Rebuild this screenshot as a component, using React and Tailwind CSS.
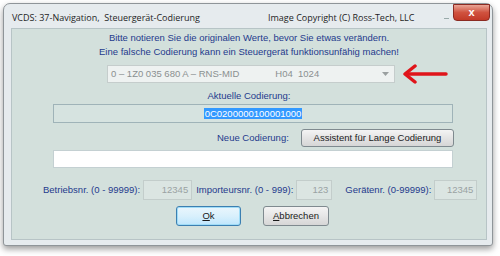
import React from 'react';

const sans = { fontFamily: '"Liberation Sans", Arial, sans-serif' };
const titleFont = { fontFamily: '"Open Sans", "Noto Sans", sans-serif' };

const NumField = ({ label, value, width }) => (
  <div className="flex items-center whitespace-nowrap">
    <span className="text-[9.5px] text-[#243a8c] mr-[3px]">{label}</span>
    <div
      className={`${width} h-[20px] bg-[#dbe5e2] border border-[#c3cdcb] flex items-center justify-end pr-[3px] text-[9.5px] text-[#9aa2a2]`}
    >
      {value}
    </div>
  </div>
);

const App = () => {
  return (
    <div className="w-[500px] h-[256px] bg-white pt-[3px] pl-[3px]" style={sans}>
      {/* Window */}
      <div className="w-[490px] h-[243px] bg-[#e6ebee] border border-[#8f9599] rounded-t-[7px] rounded-b-[3px] shadow-[0_3px_6px_rgba(0,0,0,0.4)] flex flex-col">
        {/* Title bar */}
        <div className="h-[24px] flex items-start relative whitespace-nowrap">
          <span className="ml-[8px] mt-[8px] text-[9px] leading-[12px] text-[#1e1e1e]" style={titleFont}>
            VCDS: 37-Navigation,&nbsp; Steuergerät-Codierung
          </span>
          <span className="absolute left-[264px] top-[8px] text-[9px] leading-[12px] text-[#1e1e1e]" style={titleFont}>
            Image Copyright (C) Ross-Tech, LLC
          </span>
          <span className="absolute left-[440px] top-[14px] w-[5px] h-[1px] bg-[#9aa]" />
          <div className="absolute left-[449px] top-0 w-[37px] h-[17px] rounded-b-[4px] border border-[#8b2a22] bg-[linear-gradient(#e9a596,#d0523f_50%,#c23a28)] flex items-center justify-center">
            <span className="text-white text-[11px] font-bold leading-none -mt-[1px]">x</span>
          </div>
        </div>

        {/* Client area */}
        <div className="ml-[7px] w-[476px] h-[212px] bg-[#d3e0dc] border border-[#b7c4c6] flex flex-col text-[#243a8c]">
          <div className="mt-[2px] text-center text-[9.5px] leading-[14px]">
            Bitte notieren Sie die originalen Werte, bevor Sie etwas verändern.
          </div>
          <div className="text-center text-[9.5px] leading-[14px]">
            Eine falsche Codierung kann ein Steuergerät funktionsunfähig machen!
          </div>

          {/* Dropdown row */}
          <div className="mt-[5px] flex items-center">
            <div className="ml-[95px] w-[288px] h-[18px] bg-[#eef2f1] border border-[#c5cdcc] flex items-center text-[9.5px] text-[#8a9090] whitespace-nowrap">
              <span className="ml-[3px]">0 – 1Z0 035 680 A – RNS-MID</span>
              <span className="ml-[36px]">H04&nbsp; 1024</span>
              <svg className="ml-auto mr-[5px]" width="7" height="4" viewBox="0 0 7 4">
                <path d="M0 0h7L3.5 4z" fill="#9aa0a0" />
              </svg>
            </div>
            <svg className="ml-[7px]" width="46" height="20" viewBox="0 0 46 20">
              <path d="M44 10H6" stroke="#e0141a" strokeWidth="3.5" strokeLinecap="round" />
              <path d="M13 2L3 10l10 8" fill="none" stroke="#e0141a" strokeWidth="3.5" strokeLinecap="round" strokeLinejoin="round" />
            </svg>
          </div>

          <div className="mt-[5px] text-center text-[9.5px] leading-[13px]">Aktuelle Codierung:</div>

          {/* Current coding */}
          <div className="mt-[2px] ml-[41px] w-[400px] h-[19px] bg-[#d6e3e0] border border-[#9fb3b8] flex items-center justify-center">
            <span className="bg-[#3399ff] text-white text-[9.5px] leading-[11px] px-[1px]">0C0200000100001000</span>
          </div>

          {/* Neue Codierung row */}
          <div className="mt-[6px] flex items-center">
            <span className="ml-[205px] w-[74px] text-[9.5px] whitespace-nowrap">Neue Codierung:</span>
            <button className="ml-[10px] w-[153px] h-[18px] rounded-[3px] border border-[#7f8a8f] bg-[linear-gradient(#f4f4f4,#e4e4e4_50%,#d6d6d6)] text-[9.5px] text-[#1a1a1a] whitespace-nowrap">
              Assistent für Lange Codierung
            </button>
          </div>

          {/* New coding input */}
          <div className="mt-[3px] ml-[41px] w-[400px] h-[18px] bg-white border border-[#c4d0d2]" />

          {/* Numbers row */}
          <div className="mt-[12px] ml-[31px] flex items-center">
            <NumField label="Betriebsnr. (0 - 99999):" value="12345" width="w-[49px]" />
            <div className="ml-[4px]">
              <NumField label="Importeursnr. (0 - 999):" value="123" width="w-[36px]" />
            </div>
            <div className="ml-[13px]">
              <NumField label="Gerätenr. (0-99999):" value="12345" width="w-[43px]" />
            </div>
          </div>

          {/* Buttons */}
          <div className="mt-[6px] flex items-center">
            <button className="ml-[164px] w-[65px] h-[20px] rounded-[3px] border border-[#3c7fb1] bg-[linear-gradient(#eaf6fd,#d9f0fc_50%,#bee6fd)] shadow-[inset_0_0_0_1px_#9fdcf7] text-[9.5px] text-[#1a1a1a]">
              <span className="underline">O</span>k
            </button>
            <button className="ml-[22px] w-[66px] h-[20px] rounded-[3px] border border-[#7f8a8f] bg-[linear-gradient(#f4f4f4,#e6e6e6_50%,#d6d6d6)] text-[9.5px] text-[#1a1a1a]">
              <span className="underline">A</span>bbrechen
            </button>
          </div>
        </div>
      </div>
    </div>
  );
};

export default App;
